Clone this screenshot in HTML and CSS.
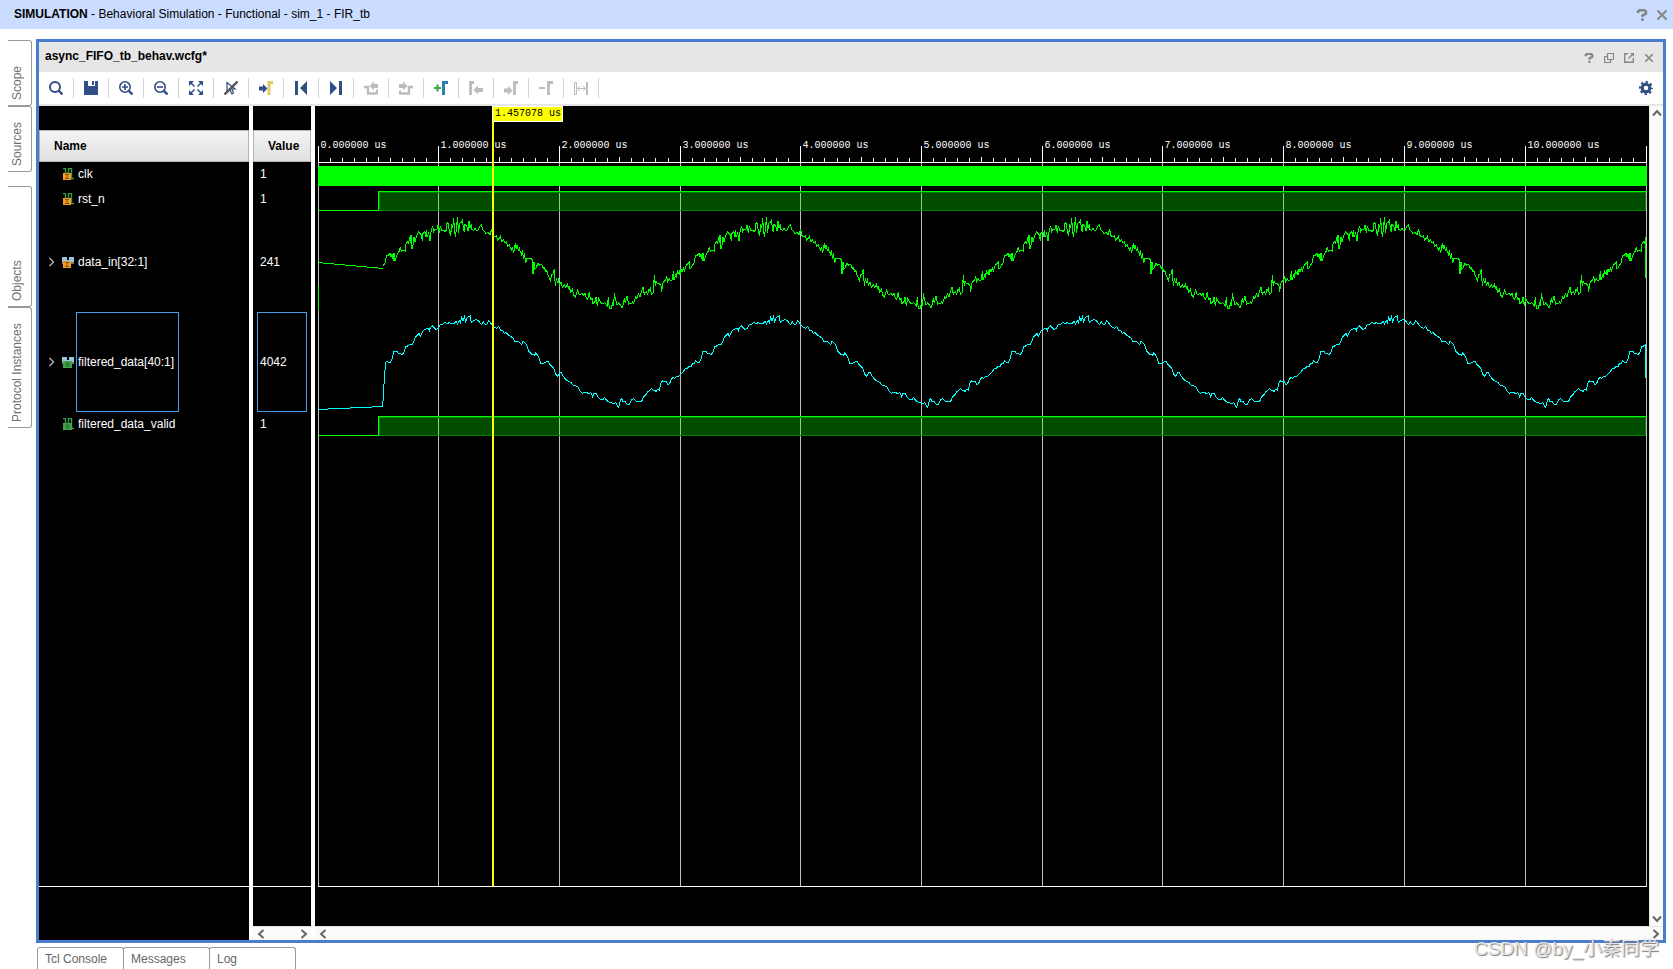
FILE: index.html
```html
<!DOCTYPE html>
<html lang="en">
<head>
<meta charset="utf-8">
<title>Behavioral Simulation - FIR_tb</title>
<link rel="stylesheet" href="styles.css">
</head>
<body>
<svg class="defs" aria-hidden="true">
  <defs>
    <symbol id="help" viewBox="0 0 12 12"><path d="M2 4V2.500L3.500 1.200H8.500L10 2.500V4.500L6.500 6.500V8M6.500 9.300V12" fill="none" stroke="currentColor" stroke-width="2.600"/></symbol>
    <symbol id="close" viewBox="0 0 12 12"><path d="M1.500 1.500L10.500 10.500M10.500 1.500L1.500 10.500" fill="none" stroke="currentColor" stroke-width="2"/></symbol>
    <symbol id="chev" viewBox="0 0 12 12"><path d="M3.500 2L8 6L3.500 10" fill="none" stroke="currentColor" stroke-width="2"/></symbol>
    <symbol id="chev-thin" viewBox="0 0 12 12"><path d="M4.500 2L8.500 6L4.500 10" fill="none" stroke="currentColor" stroke-width="1.300"/></symbol>
    <symbol id="sig" viewBox="0 0 12 12"><path d="M1 .5H3.500V11M6.500 8V.5H9.500V10.500H12M6.500 .5V6" fill="none" stroke="#3a9a47" stroke-width="1.400"/></symbol>
    <symbol id="bus" viewBox="0 0 12 12"><path d="M0 1H5V4H7V1H12V8H0Z" fill="#9ac4dc"/><path d="M0 6H12V8H0Z" fill="#777"/></symbol>
    <symbol id="badge-in" viewBox="0 0 12 12"><path d="M1 5H9V12H1Z" fill="#f39a22"/><path d="M3 6.500H7M3 10.500H7M5 6.500V10.500" stroke="#80500c"/></symbol>
    <symbol id="badge-out" viewBox="0 0 12 12"><path d="M1 5H10V12H1Z" fill="#44a348"/><ellipse cx="5.500" cy="8.500" rx="1.500" ry="2" fill="none" stroke="#175d20"/></symbol>
  </defs>
</svg>

<header class="titlebar">
  <h1 class="title"><b>SIMULATION</b> - Behavioral Simulation - Functional - sim_1 - FIR_tb</h1>
  <button class="icon-btn" aria-label="Help"><svg class="i12"><use href="#help"/></svg></button>
  <button class="icon-btn" aria-label="Close"><svg class="i12"><use href="#close"/></svg></button>
</header>

<div class="workspace">
  <nav class="side">
    <button class="side-tab short">Scope</button>
    <button class="side-tab short">Sources</button>
    <button class="side-tab tall apart">Objects</button>
    <button class="side-tab tall">Protocol Instances</button>
  </nav>

  <main class="panel">
    <div class="panel-head">
      <h2 class="panel-title">async_FIFO_tb_behav.wcfg*</h2>
      <button class="icon-btn" aria-label="Help"><svg class="i10"><use href="#help"/></svg></button>
      <button class="icon-btn" aria-label="Restore"><svg class="i10" viewBox="0 0 10 10"><path d="M3.500 .5H9.500V6.500H3.500ZM3.500 3.500H.5V9.500H6.500V6.500" fill="none" stroke="currentColor" stroke-width="1.200"/></svg></button>
      <button class="icon-btn" aria-label="Float"><svg class="i10" viewBox="0 0 10 10"><path d="M4 .7H.7V9.300H9.300V5M4.500 5.500L8 2" fill="none" stroke="currentColor" stroke-width="1.400"/><path d="M6 0H10V4Z" fill="currentColor"/></svg></button>
      <button class="icon-btn" aria-label="Close"><svg class="i10"><use href="#close"/></svg></button>
    </div>

    <div class="toolbar">
      <button class="tool" aria-label="Find"><svg class="i14" viewBox="0 0 14 14"><circle cx="6" cy="6" r="5" fill="none" stroke="currentColor" stroke-width="2"/><path d="M9.500 9.500L13.500 13.500" stroke="currentColor" stroke-width="2.400"/></svg></button>
      <button class="tool" aria-label="Save"><svg class="i14" viewBox="0 0 14 14"><path d="M0 0H4V5H11V0H14V14H0ZM8 0H10V4H8Z" fill="currentColor"/></svg></button>
      <button class="tool" aria-label="Zoom In"><svg class="i14" viewBox="0 0 14 14"><circle cx="6" cy="6" r="5.200" fill="none" stroke="currentColor" stroke-width="1.600"/><path d="M3 6H9M6 3V9" stroke="currentColor" stroke-width="1.600"/><path d="M9.800 9.800L13.500 13.500" stroke="currentColor" stroke-width="2.400"/></svg></button>
      <button class="tool" aria-label="Zoom Out"><svg class="i14" viewBox="0 0 14 14"><circle cx="6" cy="6" r="5.200" fill="none" stroke="currentColor" stroke-width="1.600"/><path d="M3 6H9" stroke="currentColor" stroke-width="1.600"/><path d="M9.800 9.800L13.500 13.500" stroke="currentColor" stroke-width="2.400"/></svg></button>
      <button class="tool" aria-label="Zoom Fit"><svg class="i14" viewBox="0 0 14 14"><path d="M0 0H5L0 5ZM9 0H14V5ZM14 9V14H9ZM0 9L5 14H0Z" fill="currentColor"/><path d="M2 2L5.500 5.500M12 2L8.500 5.500M2 12L5.500 8.500M12 12L8.500 8.500" stroke="currentColor" stroke-width="1.500"/></svg></button>
      <button class="tool" aria-label="Toggle Cursor"><svg class="i14" viewBox="0 0 14 14"><path d="M3 1.500V10.500L5.500 8.500L8 13L9.500 12L7.800 8H11Z" fill="none" stroke="currentColor" stroke-width="1.200"/><path d="M.5 13.500L13.500 .5" stroke="#555" stroke-width="2.400"/></svg></button>
      <button class="tool" aria-label="Go to Cursor"><svg class="i14" viewBox="0 0 14 14"><path d="M0 5.500H4V3L8.500 7.500L4 12V9.500H0Z" fill="currentColor"/><path d="M10 14V1.500H14" fill="none" stroke="#e2c866" stroke-width="3"/></svg></button>
      <button class="tool" aria-label="Go to Start"><svg class="i14" viewBox="0 0 14 14"><path d="M1 0H4V14H1ZM13 0V14L6 7Z" fill="currentColor"/></svg></button>
      <button class="tool" aria-label="Go to End"><svg class="i14" viewBox="0 0 14 14"><path d="M10 0H13V14H10ZM1 0V14L8 7Z" fill="currentColor"/></svg></button>
      <button class="tool" disabled aria-label="Previous Transition"><svg class="i14" viewBox="0 0 14 14"><path d="M0 6H4V12.500H13V8.500" fill="none" stroke="currentColor" stroke-width="2.400"/><path d="M5.500 5L10 .5V3H14V7H10V9.500Z" fill="currentColor"/></svg></button>
      <button class="tool" disabled aria-label="Next Transition"><svg class="i14" viewBox="0 0 14 14"><path d="M14 6H10V12.500H1V9.500" fill="none" stroke="currentColor" stroke-width="2.400"/><path d="M8.500 5L4 .5V3H0V7H4V9.500Z" fill="currentColor"/></svg></button>
      <button class="tool" aria-label="Add Marker"><svg class="i14" viewBox="0 0 14 14"><path d="M0 7H7M3.500 3.500V10.500" stroke="#3fae49" stroke-width="2.200"/><path d="M9.500 14V1.500H14" fill="none" stroke="#2b7db3" stroke-width="3"/></svg></button>
      <button class="tool" disabled aria-label="Previous Marker"><svg class="i14" viewBox="0 0 14 14"><path d="M1.500 14V1.500H5" fill="none" stroke="currentColor" stroke-width="2.800"/><path d="M4.500 9L9 4.500V7H14V11H9V13.500Z" fill="currentColor"/></svg></button>
      <button class="tool" disabled aria-label="Next Marker"><svg class="i14" viewBox="0 0 14 14"><path d="M10.500 14V1.500H14" fill="none" stroke="currentColor" stroke-width="2.800"/><path d="M8.500 9.500L4 5V7.500H0V11.500H4V14Z" fill="currentColor"/></svg></button>
      <button class="tool" disabled aria-label="Remove Marker"><svg class="i14" viewBox="0 0 14 14"><path d="M0 7H6" stroke="currentColor" stroke-width="2"/><path d="M9.500 14V1.500H14" fill="none" stroke="currentColor" stroke-width="2.800"/></svg></button>
      <button class="tool" disabled aria-label="Measure"><svg class="i14" viewBox="0 0 14 14"><path d="M.5 1.500H2.500V13.500H.5Z" fill="none" stroke="currentColor"/><path d="M13 1V14" stroke="currentColor" stroke-width="2"/><path d="M4 7.500H11M6 5L3.500 7.500L6 10M9 5L11.500 7.500L9 10" fill="none" stroke="currentColor"/></svg></button>
      <button class="tool settings" aria-label="Settings"><svg class="i14" viewBox="0 0 14 14"><circle cx="7" cy="7" r="3.800" fill="none" stroke="currentColor" stroke-width="3"/><circle cx="7" cy="7" r="5.900" fill="none" stroke="currentColor" stroke-width="2.200" stroke-dasharray="2.400 2.234" stroke-dashoffset="1.200"/></svg></button>
    </div>

    <div class="viewer">
      <section class="col names">
        <div class="col-head">Name</div>
        <ul class="rows">
          <li class="row"><svg class="i12"><use href="#sig"/><use href="#badge-in"/></svg><span class="label">clk</span></li>
          <li class="row"><svg class="i12"><use href="#sig"/><use href="#badge-in"/></svg><span class="label">rst_n</span></li>
          <li class="row analog"><button class="expand" aria-label="Expand data_in"><svg class="i12"><use href="#chev-thin"/></svg></button><svg class="i12"><use href="#bus"/><use href="#badge-in"/></svg><span class="label">data_in[32:1]</span></li>
          <li class="row analog"><button class="expand" aria-label="Expand filtered_data"><svg class="i12"><use href="#chev-thin"/></svg></button><svg class="i12"><use href="#bus"/><use href="#badge-out"/></svg><span class="label picked">filtered_data[40:1]</span></li>
          <li class="row"><svg class="i12"><use href="#sig"/><use href="#badge-out"/></svg><span class="label">filtered_data_valid</span></li>
        </ul>
        <div class="foot foot-tall"></div>
      </section>

      <section class="col values">
        <div class="col-head">Value</div>
        <ul class="rows">
          <li class="row">1</li>
          <li class="row">1</li>
          <li class="row analog">241</li>
          <li class="row analog picked-row"><span class="picked-value">4042</span></li>
          <li class="row">1</li>
        </ul>
        <div class="foot"></div>
        <div class="hscroll"><button class="arrow" aria-label="Scroll left"><svg class="i12 flip"><use href="#chev"/></svg></button><button class="arrow" aria-label="Scroll right"><svg class="i12"><use href="#chev"/></svg></button></div>
      </section>

      <section class="waves">
        <div class="wave-main">
          <div class="canvas">
            <div class="plot">
              <svg class="plot-svg">
                <defs>
                  <path id="din" d="M0 273L0 262L5 283L9 280L11 255L13 225L16 258L18 242L22 252L28 250L33 258L35 275L38 250L42 245L48 238L50 228L53 245L58 236L62 242L67 240L70 213L72 240L76 228L79 218L80 235L82 210L86 222L88 210L90 225L93 208L96 215L100 205L103 213L107 200L110 195L118 187L120 205L124 203L128 195L132 190L137 165L142 165L147 160L150 172L153 163L157 182L159 160L162 183L166 170L172 158L174 155L178 140L181 155L187 150L193 153L195 132L200 125L203 130L206 110L208 130L210 105L213 148L217 130L219 110L222 125L228 105L232 96L240 103L244 122L246 100L252 95L254 112L256 90L258 112L263 100L267 122L270 95L275 78L278 95L282 88L287 90L291 75L295 98L298 77L303 92L308 90L312 95L316 90L318 68L322 72L326 100L329 107L332 72L335 85L338 55L341 95L343 110L347 85L349 50L353 98L356 70L360 68L364 62L366 75L370 97L372 72L378 80L381 93L384 62L387 85L391 72L393 88L398 92L402 85L408 93L412 88L416 80L421 74L425 90L430 93L435 100L442 98L447 104L452 88L455 105L460 110L466 108L470 120L475 115L478 108L482 125L488 120L492 130L496 125L500 138L505 135L508 145L512 150L514 140L518 160L520 148L523 130L526 148L528 135L532 150L535 145L538 155L542 165L544 150L548 178L550 158L554 188L558 175L568 175L573 178L576 222L579 185L582 208L587 200L590 190L596 195L602 192L606 205L610 202L614 215L618 212L622 228L626 235L628 242L632 225L636 222L640 208L643 258L646 235L650 250L652 235L655 255L660 245L664 262L670 255L674 262L680 250L682 268L686 258L688 278L694 268L698 285L703 292L707 278L710 270L715 285L722 280L728 285L732 280L736 295L740 298L745 275L748 300L754 295L756 310L762 305L765 290L769 318L773 295L778 305L784 312L790 308L795 312L799 318L802 292L805 325L810 327L815 310L818 318L820 280L824 300L828 315L834 308L838 315L843 325L847 312L850 295L853 310L858 288L863 312L872 310L876 305L878 310L884 290L888 295L892 282L897 290L902 272L906 262L910 282L916 275L920 282L924 268L927 273"/>
                  <path id="dout" d="M0 568L5 566L10 572L15 570L18 575L22 568L28 570L32 552L36 542L42 546L48 544L54 556L60 548L64 538L70 532L74 535L80 530L88 528L94 520L100 515L106 506L112 505L118 498L124 498L128 490L132 492L137 482L142 488L148 488L153 478L158 455L168 453L172 460L178 460L182 464L188 458L194 440L200 438L206 434L212 435L218 425L224 410L230 404L234 400L238 410L244 398L248 390L254 388L258 384L262 385L265 393L268 382L274 378L280 384L284 388L292 386L298 374L306 372L312 367L318 372L324 368L332 372L340 370L346 364L350 372L355 362L358 368L362 352L366 362L370 350L374 366L378 355L382 350L388 348L391 368L398 362L404 358L412 362L418 370L422 374L427 366L433 374L438 372L443 362L448 368L454 376L460 382L466 385L470 382L474 380L478 390L486 393L490 400L496 398L502 405L510 410L516 414L522 424L530 424L536 428L542 434L546 424L552 428L558 438L564 455L572 462L578 462L582 466L584 458L590 466L594 474L600 492L608 490L614 486L622 485L626 492L632 498L640 508L644 522L650 528L656 518L660 516L666 528L674 538L682 544L690 548L696 555L704 558L712 562L718 574L724 580L732 576L742 580L750 578L755 590L758 580L766 580L772 592L778 598L786 600L790 592L798 602L806 608L818 610L824 608L828 616L833 622L838 602L842 596L846 606L852 604L858 612L866 612L872 600L878 596L886 604L894 606L902 604L908 590L914 585L920 576L927 570"/>
                  <clipPath id="clip-in"><rect x="65" y="0" width="1263" height="400"/></clipPath>
                  <clipPath id="clip-out"><rect x="69" y="0" width="1259" height="400"/></clipPath>
                </defs>
                <g id="grid" class="grid"></g>
                <rect class="clock" x="0" y="60" width="1329" height="20"/>
                <g class="digital">
                  <rect class="high" x="60" y="85" width="1268" height="20"/>
                  <path class="base" d="M61.500 86.500H1327.500V104.500H61.500Z"/>
                  <path d="M0 104.500H60.500V85.500H1329"/>
                  <rect class="high" x="60" y="310" width="1268" height="20"/>
                  <path class="base" d="M61.500 311.500H1327.500V329.500H61.500Z"/>
                  <path d="M0 329.500H60.500V310.500H1329"/>
                </g>
                <g class="trace trace-in">
                  <path d="M0 156.500L65 162.500M.5 180V204M1327.500 134V172"/>
                  <g id="wave-in" clip-path="url(#clip-in)"></g>
                </g>
                <g class="trace trace-out">
                  <path d="M0 303.500L64.500 300.500L65.500 289L66.500 268L68 256L69 255M1327.500 238V272"/>
                  <g id="wave-out" clip-path="url(#clip-out)"></g>
                </g>
                <g id="ruler" class="ruler"></g>
                <rect class="cursor" x="174" y="0" width="2" height="100%"/>
                <rect class="cursor-edge" x="174" y="0" width="71" height="16"/>
                <rect class="cursor" x="175" y="1" width="69" height="14"/>
                <text class="cursor-text" x="177" y="10">1.457078 us</text>
              </svg>
            </div>
            <div class="foot"></div>
          </div>
          <div class="vscroll"><button class="arrow" aria-label="Scroll up"><svg class="i12 up"><use href="#chev"/></svg></button><button class="arrow" aria-label="Scroll down"><svg class="i12 down"><use href="#chev"/></svg></button></div>
        </div>
        <div class="hscroll"><button class="arrow" aria-label="Scroll left"><svg class="i12 flip"><use href="#chev"/></svg></button><button class="arrow" aria-label="Scroll right"><svg class="i12"><use href="#chev"/></svg></button></div>
      </section>
    </div>
  </main>
</div>

<footer class="bottom">
  <button class="bottom-tab">Tcl Console</button>
  <button class="bottom-tab">Messages</button>
  <button class="bottom-tab">Log</button>
</footer>
<div class="watermark">CSDN @by_小秦同学</div>
<script src="plot.js"></script>
</body>
</html>
```
FILE: styles.css
```css
* { box-sizing: border-box; }
html, body { height: 100%; margin: 0; }
body {
  display: flex;
  flex-direction: column;
  overflow: hidden;
  background: #fff;
  color: #000;
  font: 12px/16px "Liberation Sans", Arial, sans-serif;
}
button { margin: 0; padding: 0; border: 0; background: none; font: inherit; color: inherit; }
svg { display: block; flex: none; }
.defs { position: absolute; width: 0; height: 0; }
.i10 { width: 10px; height: 10px; }
.i12 { width: 12px; height: 12px; }
.i14 { width: 14px; height: 14px; }
.flip { transform: rotate(180deg); }
.up { transform: rotate(-90deg); }
.down { transform: rotate(90deg); }

.titlebar { display: flex; align-items: center; height: 29px; flex: none; padding: 0 1px 0 14px; background: #cadcff; }
.title { flex: 1; margin: 0; padding-bottom: 2px; font-size: 12px; font-weight: 400; }
.icon-btn { display: grid; place-items: center; width: 20px; height: 20px; color: #868686; }

.workspace { display: flex; flex: 1; min-height: 0; padding-top: 10px; }
.side { display: flex; flex-direction: column; width: 36px; padding: 1px 4px 0 8px; flex: none; }
.side-tab {
  writing-mode: vertical-rl;
  transform: rotate(180deg);
  width: 24px;
  padding: 5px 1px 5px 0;
  border: 1px solid #999;
  border-right: 0;
  border-radius: 3px 0 0 3px;
  color: #707070;
  text-align: left;
}
.side-tab { display: flex; align-items: flex-start; justify-content: flex-start; }
.short { height: 66px; }
.tall { height: 121px; }
.apart { margin-top: 14px; }

.panel { display: flex; flex-direction: column; flex: 1; min-width: 0; margin-right: 7px; border: 3px solid #4a7dd0; }
.panel-head { display: flex; align-items: center; height: 30px; flex: none; padding: 2px 4px 0 6px; background: #e6e6e6; }
.panel-title { flex: 1; margin: 0; padding-bottom: 4px; font-size: 12px; font-weight: 700; }
.toolbar { display: flex; align-items: center; height: 34px; flex: none; border-bottom: 2px solid #e6e6e6; }
.tool { display: grid; place-items: center; width: 35px; height: 20px; border-right: 1px solid #d4d4d4; color: #314f87; }
.tool:disabled { color: #bcbcbc; }
.settings { margin-left: auto; border-right: 0; }

.viewer { display: flex; flex: 1; min-height: 0; gap: 4px; }
.col { display: flex; flex-direction: column; padding-top: 24px; background: #000; color: #fff; }
.names { width: 210px; }
.values { width: 58px; }
.col-head {
  height: 32px;
  flex: none;
  padding-left: 14px;
  border: 1px solid #b4b4b4;
  background: linear-gradient(#f4f4f4, #e0e0e2);
  color: #000;
  font-weight: 700;
  line-height: 30px;
}
.rows { flex: 1; margin: 0; padding: 0; list-style: none; border-bottom: 1px solid #fff; }
.row { display: flex; align-items: center; height: 25px; padding-bottom: 2px; }
.names .row { padding-left: 23px; }
.names .analog { padding-left: 6px; }
.row.analog { height: 100px; padding-bottom: 0; }
.expand { width: 17px; color: #bbb; }
.label { padding-left: 4px; }
.picked { display: flex; align-items: center; height: 100px; margin-left: 2px; padding: 0 4px 0 1px; border: 1px solid #4aa0e6; }
.values .row { padding-left: 7px; }
.values .picked-row { padding: 0 4px; }
.picked-value { display: flex; flex: 1; align-items: center; height: 100px; padding-left: 2px; border: 1px solid #4aa0e6; }
.foot { height: 39px; flex: none; }
.foot-tall { height: 53px; }

.hscroll { display: flex; justify-content: space-between; height: 14px; flex: none; padding: 0 1px; border-top: 1px solid #e4e4e4; background: #fbfbfb; color: #666; }
.arrow { display: grid; place-items: center; width: 13px; height: 14px; }
.vscroll { display: flex; flex-direction: column; justify-content: space-between; width: 14px; padding: 1px 0; border-left: 1px solid #e4e4e4; background: #fbfbfb; color: #666; }
.vscroll .arrow { height: 12px; }

.waves { display: flex; flex-direction: column; flex: 1; min-width: 0; }
.wave-main { display: flex; flex: 1; min-height: 0; }
.canvas { display: flex; flex-direction: column; flex: 1; min-width: 0; padding: 0 2px 0 3px; background: #000; }
.plot { flex: 1; min-height: 0; overflow: hidden; border-bottom: 1px solid #fff; }
.plot-svg { width: 100%; height: 100%; shape-rendering: crispEdges; font: 10px "Liberation Mono", monospace; }
.grid line { stroke: #c0c0c0; }
.ruler line { stroke: #fff; }
.ruler text { fill: #fff; }
.clock { fill: #0f0; }
.digital path { fill: none; stroke: #0f0; }
.digital .base { stroke: #008000; }
.high { fill: #0f0; fill-opacity: .3; }
.trace { fill: none; }
.trace-in { stroke: #0f0; }
.trace-out { stroke: #0ff; }
.cycle { stroke-width: 3; }
.cursor { fill: #ff0; }
.cursor-edge { fill: #fff; }
.cursor-text { fill: #000; }

.bottom { display: flex; height: 26px; flex: none; padding: 4px 0 0 37px; }
.bottom-tab { width: 87px; height: 24px; margin-right: -1px; padding: 0 7px 2px; border: 1px solid #999; border-bottom: 0; border-radius: 3px 3px 0 0; color: #666; text-align: left; }
.watermark {
  position: absolute;
  right: 14px;
  bottom: 7px;
  color: #e4e4e4;
  font: 19px/26px "Liberation Sans", "Noto Sans CJK SC", sans-serif;
  text-shadow: 1px 1px 1px #777;
}
```
FILE: plot.js
```js
const NS = "http://www.w3.org/2000/svg";
const STEP = 120.7;   // pixels per microsecond
const CYCLE = 309;    // pixels per sine period

function add(parent, tag, attrs, text) {
  const el = document.createElementNS(NS, tag);
  for (const key in attrs) el.setAttribute(key, attrs[key]);
  if (text) el.textContent = text;
  document.getElementById(parent).appendChild(el);
}

for (let us = 0; us <= 11; us++) {
  const x = (us === 11 ? 1328 : Math.floor(us * STEP)) + 0.5;
  add("grid", "line", { x1: x, x2: x, y1: 57, y2: "100%" });
  add("ruler", "line", { x1: x, x2: x, y1: 40, y2: 56 });
  if (us === 11) break;
  add("ruler", "text", { x: x + 2, y: 42 }, us + ".000000 us");
  for (let i = 1; i < 10; i++) {
    const t = Math.floor((us + i / 10) * STEP) + 0.5;
    add("ruler", "line", { x1: t, x2: t, y1: i === 5 ? 51 : 52, y2: 56 });
  }
}
add("ruler", "line", { x1: 0, x2: 1329, y1: 56.5, y2: 56.5 });

for (let n = 0; n < 5; n++) {
  const transform = `translate(${23 + n * CYCLE} 94) scale(${1 / 3})`;
  add("wave-in", "use", { href: "#din", class: "cycle", transform });
  add("wave-out", "use", { href: "#dout", class: "cycle", transform });
}
```
